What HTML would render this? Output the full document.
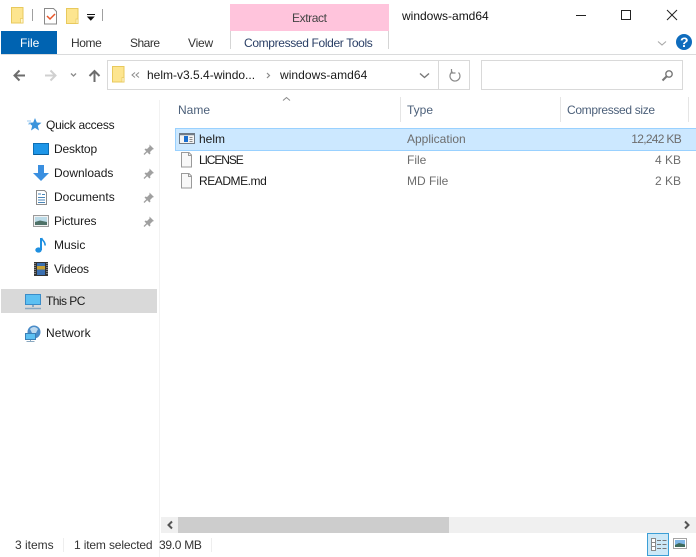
<!DOCTYPE html>
<html><head><meta charset="utf-8"><style>
html,body{margin:0;padding:0;background:#fff}
#w{position:relative;width:696px;height:557px;overflow:hidden;background:#fff;font:12px "Liberation Sans",sans-serif;color:#1a1a1a}
.t{position:absolute;white-space:nowrap;line-height:16px}
.b{position:absolute}
svg{position:absolute;overflow:visible}
.g{color:#6d6d6d}
</style></head><body><div id="w">

<div class="b" style="left:1px;top:31px;width:56px;height:23px;background:#0063b1"></div>
<div class="b" style="left:1px;top:54px;width:695px;height:1px;background:#dadbdc"></div>
<div class="b" style="left:230px;top:4px;width:159px;height:27px;background:#ffc4dc"></div>
<div class="b" style="left:230px;top:31px;width:1px;height:18px;background:#d5d5d5"></div>
<div class="b" style="left:388px;top:31px;width:1px;height:18px;background:#d5d5d5"></div>
<div class="b" style="left:1px;top:289px;width:156px;height:24px;background:#d9d9d9"></div>

<svg style="left:0;top:0" width="696" height="557" viewBox="0 0 696 557">
<!-- QAT -->
<path d="M11.5 7.5h11.5v15.5h-11.500z" fill="#fde58f" stroke="#e8c95c"/><path d="M20.5 18.500h2.500v4.500h-2.500z" fill="#fff6cf" stroke="#e8c95c" stroke-width=".7"/>
<path d="M32.500 9v12" stroke="#a0a0a0"/>
<path d="M44.500 8.500h9l3 3v12.500h-12z" fill="#fff" stroke="#8a8a8a"/><path d="M47 16l3 3 5-5" fill="none" stroke="#e8562a" stroke-width="1.500"/>
<path d="M66.500 8.500h11.500v15h-11.500z" fill="#fde58f" stroke="#e8c95c"/><path d="M76 19h2v4.500h-2z" fill="#fff6cf" stroke="#e8c95c" stroke-width=".7"/>
<path d="M87 14.500h8M88 17l2.800 3 2.800-3z" fill="#111" stroke="#111" stroke-width="1"/>
<path d="M102.500 9v12" stroke="#a0a0a0"/>
<!-- window buttons -->
<path d="M576 15.500h10" stroke="#222"/>
<rect x="621.500" y="10.500" width="9" height="9" fill="none" stroke="#222"/>
<path d="M667 10l10 10M677 10l-10 10" stroke="#222" fill="none"/>
<!-- ribbon -->
<path d="M658 41.500l4 3.500 4-3.500" fill="none" stroke="#a8a8a8" stroke-width="1.100"/>
<circle cx="684" cy="42" r="8" fill="#0f6cbd"/>
<!-- nav -->
<path d="M25 75.500h-10M19.500 70.500l-5 5 5 5" fill="none" stroke="#6d6d6d" stroke-width="2"/>
<path d="M45 75.500h10M50.500 70.500l5 5-5 5" fill="none" stroke="#d0d0d0" stroke-width="2"/>
<path d="M71 73.500l2.500 2.500 2.500-2.500" fill="none" stroke="#8a8a8a" stroke-width="1.300"/>
<path d="M94.500 82v-11M89.500 76l5-5 5 5" fill="none" stroke="#6d6d6d" stroke-width="2"/>
<path d="M112.500 66.500h11.500v15.500h-11.500z" fill="#fde58f" stroke="#e8c95c"/><path d="M122 77.500h2v4.500h-2z" fill="#fff6cf" stroke="#e8c95c" stroke-width=".7"/>
<path d="M135 72.500l-3 2.500 3 2.500M139 72.500l-3 2.500 3 2.500" fill="none" stroke="#8a8a8a"/>
<path d="M267 73l2.500 2.500-2.500 2.500" fill="none" stroke="#8a8a8a" stroke-width="1.200"/>
<path d="M420 73.500l4.500 4 4.500-4" fill="none" stroke="#777" stroke-width="1.400"/>
<path d="M458.500 72.500a5 5 0 1 1-6-.8M451.500 69v4h4" fill="none" stroke="#8a8a8a" stroke-width="1.200"/>
<circle cx="669" cy="74" r="3.200" fill="none" stroke="#777" stroke-width="1.400"/><path d="M666.500 76.500l-4 4" stroke="#777" stroke-width="2"/>
<!-- sort -->
<path d="M283 100.500l3.500-3 3.500 3" fill="none" stroke="#8a8a8a"/>
<!-- quick access -->
<path d="M35 118l1.800 4.500 4.700.3-3.700 3 1.200 4.700-4-2.600-4 2.600 1.200-4.700-3.700-3 4.700-.3z" fill="#3b94dc"/><path d="M27 121h4M28 124h3" stroke="#9ccbf0"/>
<!-- desktop -->
<path d="M33.500 143.500h15v11h-15z" fill="#1e96e8" stroke="#0e6fb5"/><path d="M34 154.500h14" stroke="#0b5c98"/>
<!-- downloads -->
<path d="M38 165h6v8h5l-8 8-8-8h5z" fill="#3a8fe0"/>
<!-- documents -->
<path d="M36.500 190.500h8l2 2v12h-10z" fill="#fff" stroke="#8c8c8c"/><path d="M38 194h3M42 194.500h3M38 197.500h7M38 200h7M38 202.500h7" stroke="#4a86b8"/>
<!-- pictures -->
<rect x="33.500" y="215.500" width="15" height="11" fill="#f2f2f2" stroke="#9a9a9a"/><rect x="35" y="217" width="12" height="8" fill="#bcdbe8"/><path d="M35 222l5-1.500 7 1.500v3h-12z" fill="#4f7268"/>
<!-- music -->
<path d="M41 238v12" stroke="#1e8fe0" stroke-width="2"/><ellipse cx="38.500" cy="250" rx="3.200" ry="2.600" fill="#1e8fe0"/><path d="M41.500 238c1 3 4 3.500 3.500 7.500" fill="none" stroke="#1e8fe0" stroke-width="1.600"/>
<!-- videos -->
<rect x="34" y="262" width="14" height="14" fill="#333"/><rect x="37" y="263" width="8" height="12" fill="#3a6fb0"/><path d="M37 266h8v3.500h-8z" fill="#c8a032"/><path d="M35 263v12M47 263v12" stroke="#ccc" stroke-dasharray="1 1"/>
<!-- this pc -->
<rect x="25.500" y="294.500" width="15" height="10" fill="#5cc0f2" stroke="#3a8cc8"/><path d="M33 305v2" stroke="#8aa8c0" stroke-width="2"/><path d="M25 308.500h16" stroke="#8aa8c0" stroke-width="1.500"/>
<!-- network -->
<circle cx="34" cy="332" r="6.500" fill="#4a8cc8"/><path d="M30 329q4-4 8 0l-2 4h-4z" fill="#bcd8ee"/><rect x="25.500" y="333.500" width="10" height="6" fill="#5cc0f2" stroke="#3a7fb5"/><path d="M30.500 340v1.500M26.500 341.500h8" stroke="#8aa8c0"/>
<!-- pins -->
<defs><g id="pin"><path d="M149.500 144.500l4.500 4.500-1.500.5-2.500 2.500.5 1.500-1 1-5-5 1-1 1.500.5 2.500-2.500z" fill="#a0a0a0"/><path d="M147 151.500l-3 3" stroke="#a0a0a0" stroke-width="1.300"/></g></defs>
<use href="#pin"/><use href="#pin" y="24"/><use href="#pin" y="48"/><use href="#pin" y="72"/>
</svg>

<div class="t" style="left:292px;top:10px;color:#444;letter-spacing:-.4px">Extract</div>
<div class="t" style="left:402px;top:8px;color:#111">windows-amd64</div>
<div class="t" style="left:20px;top:35px;color:#fff">File</div>
<div class="t" style="left:71px;top:35px;color:#333;letter-spacing:-.4px">Home</div>
<div class="t" style="left:130px;top:35px;color:#333;letter-spacing:-.5px">Share</div>
<div class="t" style="left:188px;top:35px;color:#333;letter-spacing:-.2px">View</div>
<div class="t" style="left:244px;top:35px;color:#2a3f66;letter-spacing:-.35px">Compressed Folder Tools</div>
<div class="t" style="left:680px;top:34px;color:#fff;font-weight:bold;font-size:14px">?</div>

<div class="b" style="left:107px;top:60px;width:361px;height:28px;border:1px solid #d9d9d9"></div>
<div class="b" style="left:438px;top:61px;width:1px;height:28px;background:#d9d9d9"></div>
<div class="b" style="left:481px;top:60px;width:200px;height:28px;border:1px solid #d9d9d9"></div>
<div class="t" style="left:147px;top:67px">helm-v3.5.4-windo...</div>
<div class="t" style="left:280px;top:67px;letter-spacing:.05px">windows-amd64</div>

<div class="b" style="left:159px;top:100px;width:1px;height:457px;background:#f2f2f2"></div>
<div class="b" style="left:400px;top:97px;width:1px;height:25px;background:#e5e5e5"></div>
<div class="b" style="left:560px;top:97px;width:1px;height:25px;background:#e5e5e5"></div>
<div class="b" style="left:688px;top:97px;width:1px;height:25px;background:#e5e5e5"></div>
<div class="t" style="left:178px;top:102px;color:#4c607a">Name</div>
<div class="t" style="left:407px;top:102px;color:#4c607a">Type</div>
<div class="t" style="left:567px;top:102px;color:#4c607a;letter-spacing:-.33px">Compressed size</div>

<div class="b" style="left:175px;top:128px;width:521px;height:21px;background:#cce8ff;border:1px solid #99d1ff;border-right:0;box-sizing:content-box"></div>
<svg style="left:0;top:0" width="696" height="557" viewBox="0 0 696 557">
<rect x="179.500" y="133.500" width="15" height="10" fill="#f4f4f4" stroke="#6f7a86"/><path d="M180 134.500h14" stroke="#6f7a86" stroke-width="1.500"/><rect x="184" y="136" width="4" height="6" fill="#1a6fd0"/><path d="M189.500 137.500h3M189.500 139.500h3M189.500 141.500h3" stroke="#8a8a8a"/>
<path d="M181.500 152.500h7.500l2.500 2.500v12h-10z" fill="#f8f8f8" stroke="#9a9a9a"/><path d="M188.500 152.500v3h3" fill="none" stroke="#9a9a9a"/>
<path d="M181.500 173.500h7.500l2.500 2.500v12h-10z" fill="#f8f8f8" stroke="#9a9a9a"/><path d="M188.500 173.500v3h3" fill="none" stroke="#9a9a9a"/>
</svg>
<div class="t" style="left:199px;top:131px">helm</div>
<div class="t" style="left:199px;top:152px;letter-spacing:-1.100px">LICENSE</div>
<div class="t" style="left:199px;top:173px;letter-spacing:-.45px">README.md</div>
<div class="t g" style="left:407px;top:131px">Application</div>
<div class="t g" style="left:407px;top:152px">File</div>
<div class="t g" style="left:407px;top:173px">MD File</div>
<div class="t g" style="right:15px;top:131px;letter-spacing:-.7px">12,242 KB</div>
<div class="t g" style="right:15px;top:152px">4 KB</div>
<div class="t g" style="right:15px;top:173px">2 KB</div>

<div class="t" style="left:46px;top:117px;letter-spacing:-.25px">Quick access</div>
<div class="t" style="left:54px;top:141px;letter-spacing:-.15px">Desktop</div>
<div class="t" style="left:54px;top:165px">Downloads</div>
<div class="t" style="left:54px;top:189px">Documents</div>
<div class="t" style="left:54px;top:213px;letter-spacing:-.12px">Pictures</div>
<div class="t" style="left:54px;top:237px">Music</div>
<div class="t" style="left:54px;top:261px;letter-spacing:-.3px">Videos</div>
<div class="t" style="left:46px;top:293px;letter-spacing:-.55px">This PC</div>
<div class="t" style="left:46px;top:325px;letter-spacing:.1px">Network</div>

<div class="b" style="left:161px;top:517px;width:535px;height:16px;background:#f0f0f0"></div>
<div class="b" style="left:178px;top:517px;width:271px;height:16px;background:#cdcdcd"></div>
<svg style="left:0;top:0" width="696" height="557" viewBox="0 0 696 557">
<path d="M172 521.500l-3.500 3.500 3.500 3.500" fill="none" stroke="#555" stroke-width="2"/>
<path d="M685 521.500l3.500 3.500-3.500 3.500" fill="none" stroke="#555" stroke-width="2"/>
</svg>

<div class="t" style="left:15px;top:537px;color:#333">3 items</div>
<div class="b" style="left:63px;top:538px;width:1px;height:14px;background:#eee"></div>
<div class="t" style="left:74px;top:537px;color:#333;letter-spacing:-.15px">1 item selected</div>
<div class="t" style="left:159px;top:537px;color:#333;letter-spacing:-.3px">39.0 MB</div>
<div class="b" style="left:211px;top:538px;width:1px;height:14px;background:#eee"></div>

<div class="b" style="left:647px;top:533px;width:20px;height:21px;background:#cce8f7;border:1px solid #3c9fd6"></div>
<svg style="left:0;top:0" width="696" height="557" viewBox="0 0 696 557">
<rect x="651.500" y="538.500" width="4" height="4" fill="#fff" stroke="#888"/><rect x="651.500" y="542.500" width="4" height="4" fill="#fff" stroke="#888"/><rect x="651.500" y="546.500" width="4" height="4" fill="#fff" stroke="#888"/>
<path d="M657 540.500h4M662.500 540.500h4M657 544.500h4M662.500 544.500h4M657 548.500h4M662.500 548.500h4" stroke="#777"/>
<rect x="673.500" y="538.500" width="13" height="10" fill="#fff" stroke="#a5a5a5"/><rect x="675" y="540" width="10" height="7" fill="#7fb6e6"/><path d="M675 545l4-2 6 1.500v2.500h-10z" fill="#3f6b5c"/>
</svg>
</div></body></html>
